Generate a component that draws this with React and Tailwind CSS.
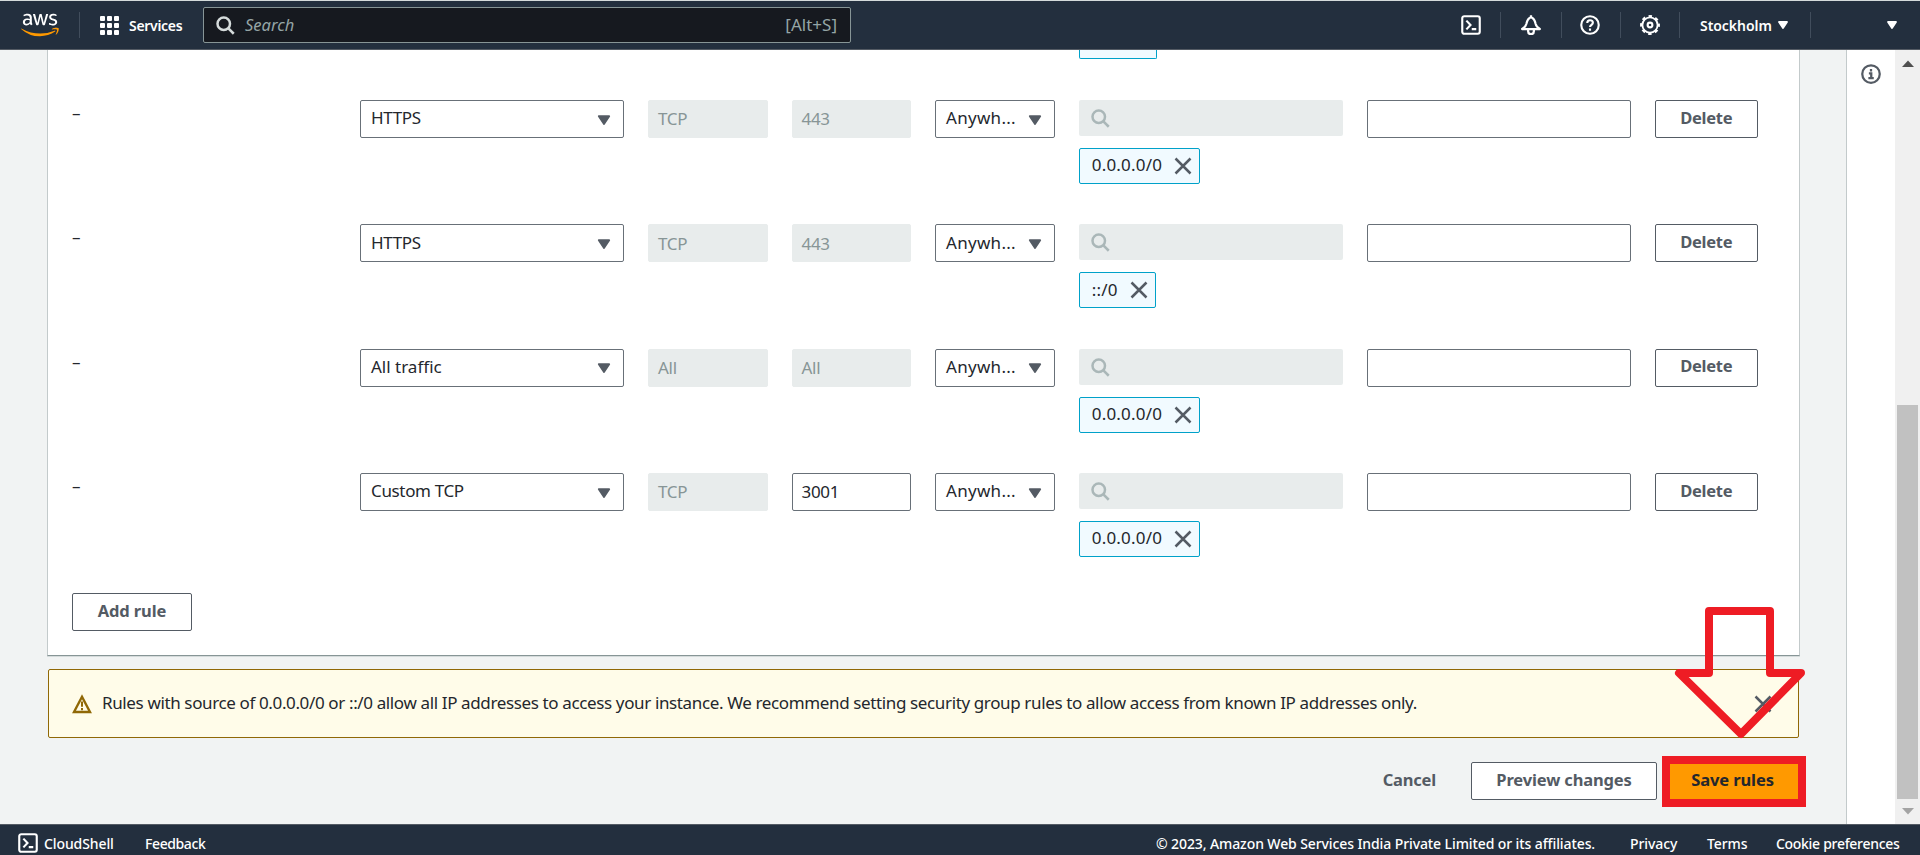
import React from 'react';
import { FaAws } from 'react-icons/fa';

const CloseIcon = ({ className = '' }) => (
  <svg viewBox="0 0 16 16" className={`size-5 shrink-0 fill-none stroke-[#545b64] stroke-2 ${className}`}>
    <path d="M2 2l12 12M14 2L2 14" />
  </svg>
);

const SearchIcon = ({ className = '' }) => (
  <svg viewBox="0 0 16 16" className={`size-5 shrink-0 fill-none stroke-2 ${className}`}>
    <circle cx="7" cy="7" r="5" />
    <path d="M15 15l-4.5-4.5" />
  </svg>
);

const Caret = ({ className = '' }) => (
  <svg viewBox="0 0 16 16" className={`shrink-0 fill-current stroke-current stroke-[1.8] ${className}`}>
    <path d="M4 5h8l-4 6z" strokeLinejoin="round" />
  </svg>
);

const ShellIcon = () => (
  <svg viewBox="0 0 16 16" className="size-5 shrink-0 fill-none stroke-white" strokeWidth="1.7">
    <rect x="1" y="1" width="14" height="14" rx="1.6" />
    <path d="M4.3 4.5L7.6 8l-3.3 3.5M8.6 11.3h3.6" />
  </svg>
);

const BellIcon = () => (
  <svg viewBox="0 0 16 16" className="size-5 shrink-0 fill-none stroke-white" strokeWidth="1.8" strokeLinejoin="round">
    <path d="M.9 11.2h14.200c-1.900-1.100-3-2.300-3.400-4.100-.5-2.600-1.200-4.400-3.700-5.300-2.500.9-3.200 2.700-3.700 5.300-.4 1.800-1.500 3-3.400 4.100z" />
    <path d="M5.700 11.600v1.400a2.300 2.300 0 0 0 4.600 0v-1.400" />
    <path d="M8 .2v1.600" />
  </svg>
);

const HelpIcon = () => (
  <svg viewBox="0 0 16 16" className="size-5 shrink-0 fill-none stroke-white" strokeWidth="1.7">
    <circle cx="8" cy="8" r="7" />
    <path d="M5.8 6.4C5.8 5 6.7 4.2 8 4.2s2.3.8 2.3 2c0 1.600-2.300 1.700-2.300 3.500M8 10.800v1.700" />
  </svg>
);

const GearIcon = () => (
  <svg viewBox="0 0 16 16" className="size-5 shrink-0 fill-none stroke-white" strokeLinejoin="round">
    <circle cx="8" cy="8" r="6.1" strokeWidth="1.5" />
    <circle cx="8" cy="8" r="7.1" strokeWidth="1.700" strokeDasharray="2.790 2.786" strokeDashoffset="1.390" />
    <circle cx="8" cy="8" r="1.900" strokeWidth="1.700" />
  </svg>
);

const InfoIcon = () => (
  <svg viewBox="0 0 16 16" className="size-5 shrink-0 fill-none stroke-[#545b64]" strokeWidth="1.8">
    <circle cx="8" cy="8" r="7" />
    <path d="M8 4v1.900M6.300 7.500H8.200v4M5.900 11.300h4.300" />
  </svg>
);

const WarningIcon = () => (
  <svg viewBox="0 0 16 16" className="size-5 shrink-0 fill-none stroke-[#906806]" strokeWidth="1.9">
    <path d="M8 2.200L14.400 14.400H1.600z" />
    <path d="M8 6v4.200M8 11.200v1.700" strokeWidth="1.6" />
  </svg>
);

const Select = ({ children, className = '' }) => (
  <div className="flex h-[38px] items-center justify-between rounded-xs border border-[#687078] bg-white pr-[9px] pl-[10px]">
    <span className={`-mt-0.5 text-[17px] whitespace-nowrap ${className}`}>{children}</span>
    <Caret className="mt-px size-5 text-[#545b64]" />
  </div>
);

const Input = ({ children, disabled }) => (
  <div
    className={`flex h-[38px] items-center rounded-xs border pl-[9px] text-[17px] tracking-[-0.3px] ${
      disabled ? 'border-[#e8ecec] bg-[#e8ecec] text-[#879596]' : 'border-[#687078] bg-white text-[#24272d]'
    }`}
  >
    {children}
  </div>
);

const Button = ({ children, className = '' }) => (
  <div
    className={`flex h-[38px] items-center justify-center rounded-xs border border-[#545b64] bg-white pb-0.5 text-[16.5px] font-bold text-[#545b64] ${className}`}
  >
    {children}
  </div>
);

const GRID = 'grid grid-cols-[264px_264px_119.5px_119.5px_119.75px_264px_264px_103px] gap-x-6';

const RULES = [
  { type: 'HTTPS', protocol: 'TCP', port: '443', cidr: '0.0.0.0/0' },
  { type: 'HTTPS', protocol: 'TCP', port: '443', cidr: '::/0' },
  { type: 'All traffic', protocol: 'All', port: 'All', cidr: '0.0.0.0/0' },
  { type: 'Custom TCP', protocol: 'TCP', port: '3001', cidr: '0.0.0.0/0', editable: true },
];

const RuleRow = ({ rule }) => (
  <div className={`${GRID} h-[124.375px] shrink-0 items-start`}>
    <div className="text-[17px] leading-[25px]">–</div>
    <Select className={rule.type === 'All traffic' ? 'tracking-[0px]' : 'tracking-[-0.35px]'}>{rule.type}</Select>
    <Input disabled>{rule.protocol}</Input>
    <Input disabled={!rule.editable}>{rule.port}</Input>
    <Select className="tracking-[0.3px]">Anywh...</Select>
    <div>
      <div className="flex h-9 items-center rounded-xs bg-[#e8ecec] pl-[11px]">
        <SearchIcon className="stroke-[#aab7b8]" />
      </div>
      <div className="mt-3 flex h-9 w-fit items-center gap-[11px] rounded-xs border border-[#00a1c9] bg-[#f1faff] pr-[6px] pl-3">
        <span className="-mt-0.5 text-[17px] tracking-[0.2px]">{rule.cidr}</span>
        <CloseIcon />
      </div>
    </div>
    <Input />
    <Button className="tracking-[-0.3px]">Delete</Button>
  </div>
);

const Divider = () => <div className="h-[26px] w-px shrink-0 bg-[#414d5c]" />;

const Header = () => (
  <header className="flex h-[50px] shrink-0 items-center border-t border-b border-t-[#d5dbdb] border-b-[#545b64] bg-[#232f3e] text-white">
    <div className="ml-[21px] grid h-[30px] w-[38px]">
      <FaAws className="col-start-1 row-start-1 h-[30px] w-[38px] text-white [clip-path:inset(0_0_42%_0)]" />
      <FaAws className="col-start-1 row-start-1 h-[30px] w-[38px] text-[#ff9900] [clip-path:inset(58%_0_0_0)]" />
    </div>
    <div className="ml-5 flex"><Divider /></div>
    <div className="ml-5 grid grid-cols-3 gap-[2px]">
      {Array.from({ length: 9 }, (_, i) => (
        <div key={i} className="size-[5px] rounded-[1px] bg-white" />
      ))}
    </div>
    <div className="ml-[10px] w-[74px] text-[14px] font-semibold tracking-[-0.3px]">Services</div>
    <div className="flex h-9 w-[648px] items-center rounded-xs border border-[#879596] bg-[#16191f] pr-[13px] pl-[11px]">
      <SearchIcon className="stroke-[#d5dbdb]" />
      <span className="ml-[10px] text-[16.5px] text-[#95a5a6] italic">Search</span>
      <span className="ml-auto text-[17px] text-[#95a5a6]">[Alt+S]</span>
    </div>
    <div className="ml-auto flex h-full items-center">
      <ShellIcon />
      <div className="ml-[19px]"><Divider /></div>
      <div className="ml-[20px]"><BellIcon /></div>
      <div className="ml-[20px]"><Divider /></div>
      <div className="ml-[18px]"><HelpIcon /></div>
      <div className="ml-[20px]"><Divider /></div>
      <div className="ml-[19px]"><GearIcon /></div>
      <div className="ml-[19px]"><Divider /></div>
      <div className="ml-5 w-[75px] text-[14px] font-semibold tracking-[-0.05px]">Stockholm</div>
      <Caret className="size-4" />
      <div className="ml-[19px]"><Divider /></div>
      <Caret className="mr-5 ml-[73px] size-4" />
    </div>
  </header>
);

const Footer = () => (
  <footer className="flex h-[31px] shrink-0 items-center border-t border-[#545b64] bg-[#232f3e] pt-[6px] pl-[18px] text-[14px] font-medium whitespace-nowrap text-white">
    <ShellIcon />
    <span className="ml-[6px] w-[101px] tracking-[-0.1px]">CloudShell</span>
    <span className="tracking-[-0.4px]">Feedback</span>
    <div className="ml-auto flex pr-[19px]">
      <span className="w-[474px] tracking-[-0.1px]">
        © 2023, Amazon Web Services India Private Limited or its affiliates.
      </span>
      <span className="w-[77px] tracking-[-0.1px]">Privacy</span>
      <span className="w-[69px] tracking-[-0.1px]">Terms</span>
      <span className="w-[125px] tracking-[-0.3px]">Cookie preferences</span>
    </div>
  </footer>
);

const Highlight = () => (
  <svg className="pointer-events-none absolute top-[600px] left-[1655px] h-[215px] w-[160px] fill-none stroke-[#ee1c24]" viewBox="0 0 160 215">
    <path d="M54 73V11h61v62h31L86 134 24 73z" strokeWidth="8" strokeLinejoin="round" />
    <rect x="11" y="160" width="136" height="43" strokeWidth="8" />
  </svg>
);

export default function App() {
  return (
    <div className="relative flex h-[855px] w-[1920px] flex-col overflow-hidden bg-[#f1f3f3] font-['Noto_Sans','Open_Sans',sans-serif] text-[#24272d]">
      <Header />
      <div className="flex min-h-0 flex-1">
        <main className="min-w-0 flex-1 pr-[46px] pl-[47px]">
          <section className="h-[606px] border-x border-b border-x-[#c3cacb] border-b-[#879596] bg-white px-6 shadow-[0_1px_0_0_#d5dbdb]">
            <div className={`${GRID} h-[50px]`}>
              <div className="col-start-6 h-[9px] w-[78px] rounded-b-xs border border-t-0 border-[#00a1c9] bg-[#f1faff]" />
            </div>
            <div className="flex h-[493px] flex-col">
              {RULES.map((rule, i) => (
                <RuleRow key={i} rule={rule} />
              ))}
            </div>
            <Button className="w-[120px] tracking-[-0.1px]">Add rule</Button>
          </section>
          <div className="mt-[13px] mr-px ml-px flex h-[69px] items-center rounded-xs border border-[#906806] bg-[#fffce9] pr-[25px] pl-[23px]">
            <WarningIcon />
            <span className="ml-[10px] pb-px text-[17px] tracking-[-0.37px] whitespace-nowrap">
              Rules with source of 0.0.0.0/0 or ::/0 allow all IP addresses to access your instance. We recommend
              setting security group rules to allow access from known IP addresses only.
            </span>
            <CloseIcon className="ml-auto" />
          </div>
          <div className="mt-6 mr-px flex h-[38px] items-center justify-end text-[16.5px] font-bold">
            <span className="mr-[35px] pb-0.5 tracking-[-0.2px] text-[#545b64]">Cancel</span>
            <Button className="w-[186px] tracking-[-0.15px]">Preview changes</Button>
            <div className="ml-[11px] flex h-[38px] w-[131px] items-center justify-center bg-[#ff9900] pr-[2px] pb-0.5 tracking-[-0.1px]">
              Save rules
            </div>
          </div>
        </main>
        <aside className="flex w-[49px] justify-center border-l border-[#c3cacb] bg-white pt-[14px]">
          <InfoIcon />
        </aside>
        <div className="flex w-[25px] flex-col items-center bg-[#f0f0f0]">
          <svg viewBox="0 0 12 7" className="mt-[10px] h-[7px] w-3 fill-[#505050]">
            <path d="M0 7l6-6.500L12 7z" />
          </svg>
          <div className="mt-[338px] h-[394px] w-[21px] bg-[#c1c1c1]" />
          <svg viewBox="0 0 12 7" className="mt-[9px] h-[7px] w-3 fill-[#a3a3a3]">
            <path d="M0 0l6 6.500L12 0z" />
          </svg>
        </div>
      </div>
      <Footer />
      <Highlight />
    </div>
  );
}
